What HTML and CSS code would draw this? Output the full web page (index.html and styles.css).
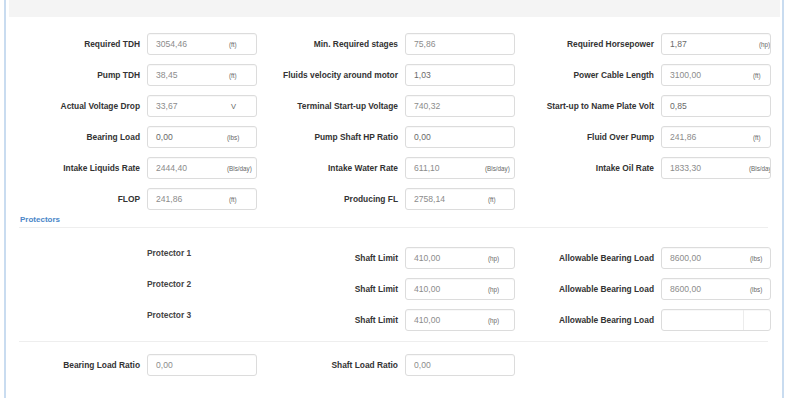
FILE: index.html
```html
<!DOCTYPE html>
<html>
<head>
<meta charset="utf-8">
<link rel="stylesheet" href="styles.css">
</head>
<body>
<div class="frame">
  <div class="head"><h3 class="title">Calculation Results</h3></div>

  <div class="grid main">
    <div class="cell"><span class="lbl">Required TDH</span><div class="inp"><span class="val">3054,46</span><span class="unit u1">(ft)</span></div></div>
    <div class="cell"><span class="lbl">Min. Required stages</span><div class="inp"><span class="val">75,86</span></div></div>
    <div class="cell c3"><span class="lbl">Required Horsepower</span><div class="inp"><span class="val dark">1,87</span><span class="unit u3hp">(hp)</span></div></div>

    <div class="cell"><span class="lbl">Pump TDH</span><div class="inp"><span class="val">38,45</span><span class="unit u1">(ft)</span></div></div>
    <div class="cell"><span class="lbl">Fluids velocity around motor</span><div class="inp"><span class="val dark">1,03</span></div></div>
    <div class="cell c3"><span class="lbl">Power Cable Length</span><div class="inp"><span class="val">3100,00</span><span class="unit u3ft">(ft)</span></div></div>

    <div class="cell"><span class="lbl">Actual Voltage Drop</span><div class="inp"><span class="val">33,67</span><span class="unit uv">V</span></div></div>
    <div class="cell"><span class="lbl">Terminal Start-up Voltage</span><div class="inp"><span class="val">740,32</span></div></div>
    <div class="cell c3"><span class="lbl">Start-up to Name Plate Volt</span><div class="inp"><span class="val dark">0,85</span></div></div>

    <div class="cell"><span class="lbl">Bearing Load</span><div class="inp"><span class="val dark">0,00</span><span class="unit u0">(lbs)</span></div></div>
    <div class="cell"><span class="lbl">Pump Shaft HP Ratio</span><div class="inp"><span class="val dark">0,00</span></div></div>
    <div class="cell c3"><span class="lbl">Fluid Over Pump</span><div class="inp"><span class="val">241,86</span><span class="unit u3ft">(ft)</span></div></div>

    <div class="cell"><span class="lbl">Intake Liquids Rate</span><div class="inp"><span class="val">2444,40</span><span class="unit u0">(Bls/day)</span></div></div>
    <div class="cell"><span class="lbl">Intake Water Rate</span><div class="inp"><span class="val">611,10</span><span class="unit u0">(Bls/day)</span></div></div>
    <div class="cell c3"><span class="lbl">Intake Oil Rate</span><div class="inp"><span class="val">1833,30</span><span class="unit u3b">(Bls/day)</span></div></div>

    <div class="cell"><span class="lbl">FLOP</span><div class="inp"><span class="val">241,86</span><span class="unit u1">(ft)</span></div></div>
    <div class="cell"><span class="lbl">Producing FL</span><div class="inp"><span class="val">2758,14</span><span class="unit u2">(ft)</span></div></div>
    <div class="cell c3"></div>
  </div>

  <div class="section">Protectors</div>
  <div class="rule"></div>

  <div class="grid prot">
    <div class="cell"><span class="plabel">Protector 1</span></div>
    <div class="cell"><span class="lbl">Shaft Limit</span><div class="inp"><span class="val">410,00</span><span class="unit u2">(hp)</span></div></div>
    <div class="cell c3"><span class="lbl">Allowable Bearing Load</span><div class="inp"><span class="val">8600,00</span><span class="unit u3lbs">(lbs)</span></div></div>

    <div class="cell"><span class="plabel">Protector 2</span></div>
    <div class="cell"><span class="lbl">Shaft Limit</span><div class="inp"><span class="val">410,00</span><span class="unit u2">(hp)</span></div></div>
    <div class="cell c3"><span class="lbl">Allowable Bearing Load</span><div class="inp"><span class="val">8600,00</span><span class="unit u3lbs">(lbs)</span></div></div>

    <div class="cell"><span class="plabel">Protector 3</span></div>
    <div class="cell"><span class="lbl">Shaft Limit</span><div class="inp"><span class="val">410,00</span><span class="unit u2">(hp)</span></div></div>
    <div class="cell c3"><span class="lbl">Allowable Bearing Load</span><div class="inp"><span class="val"></span><span class="addon-empty"></span></div></div>
  </div>

  <div class="rule second"></div>

  <div class="grid bottom">
    <div class="cell"><span class="lbl">Bearing Load Ratio</span><div class="inp"><span class="val">0,00</span></div></div>
    <div class="cell"><span class="lbl">Shaft Load Ratio</span><div class="inp"><span class="val">0,00</span></div></div>
    <div class="cell c3"></div>
  </div>
</div>
</body>
</html>
```

FILE: styles.css
```css
* { box-sizing: border-box; }

html, body {
  margin: 0;
  padding: 0;
  background: #ffffff;
  font-family: "Liberation Sans", Arial, sans-serif;
}

.frame {
  margin-left: 4px;
  width: 780px;
  height: 398px;
  border-left: 2px solid #c9dcf0;
  border-right: 2px solid #c9dcf0;
  overflow: hidden;
}

.head {
  margin: 0 2px 0 3px;
  height: 17px;
  background: #f4f4f4;
  overflow: hidden;
}

.title {
  margin: -13px 0 0 0;
  font-size: 16px;
  line-height: 16px;
  font-weight: bold;
  text-align: center;
  color: #d2d2d2;
}

.grid {
  display: grid;
  grid-template-columns: 251px 258px 256px;
  row-gap: 9px;
}

.main { margin-top: 16px; }

.cell {
  display: flex;
  align-items: center;
  height: 22px;
}

.lbl {
  flex: 1;
  text-align: right;
  padding-right: 7px;
  font-size: 8.4px;
  font-weight: bold;
  color: #333;
  white-space: nowrap;
}

.inp {
  display: flex;
  align-items: center;
  width: 110px;
  height: 22px;
  border: 1px solid #dcdcdc;
  border-radius: 3px;
  overflow: hidden;
  background: #fff;
  box-shadow: inset 0 1px 1px rgba(0,0,0,0.03);
}

.val {
  flex: none;
  width: 79px;
  padding-left: 8px;
  font-size: 8.6px;
  color: #8c8c8c;
  white-space: nowrap;
}

.val.dark { color: #6a6a6a; }

.unit {
  font-size: 6.3px;
  color: #666;
  white-space: nowrap;
}

.u0 { margin-left: 0; }
.u1 { margin-left: 2px; }
.u2 { margin-left: 3px; }
.uv { margin-left: 4px; font-size: 7.5px; }
.u3hp { margin-left: 18px; }
.u3ft { margin-left: 12px; }
.u3b { margin-left: 8px; }
.u3lbs { margin-left: 9px; }

.addon-empty {
  align-self: stretch;
  margin-left: 2px;
  width: 1px;
  background: #ececec;
}

.section {
  margin: 4px 0 0 14px;
  height: 12px;
  line-height: 12px;
  font-size: 8px;
  font-weight: bold;
  color: #4a86c8;
}

.rule {
  margin: 1px 14px 0 13px;
  height: 1px;
  background: #eeeeee;
}

.prot { margin-top: 19px; }

.prot .cell:first-child,
.prot .cell:nth-child(3n+1) {
  align-items: flex-start;
}

.plabel {
  padding-left: 141px;
  line-height: 12px;
  font-size: 8.4px;
  font-weight: bold;
  color: #444;
  white-space: nowrap;
}

.rule.second { margin-top: 10px; }

.bottom { margin-top: 12px; }
```
